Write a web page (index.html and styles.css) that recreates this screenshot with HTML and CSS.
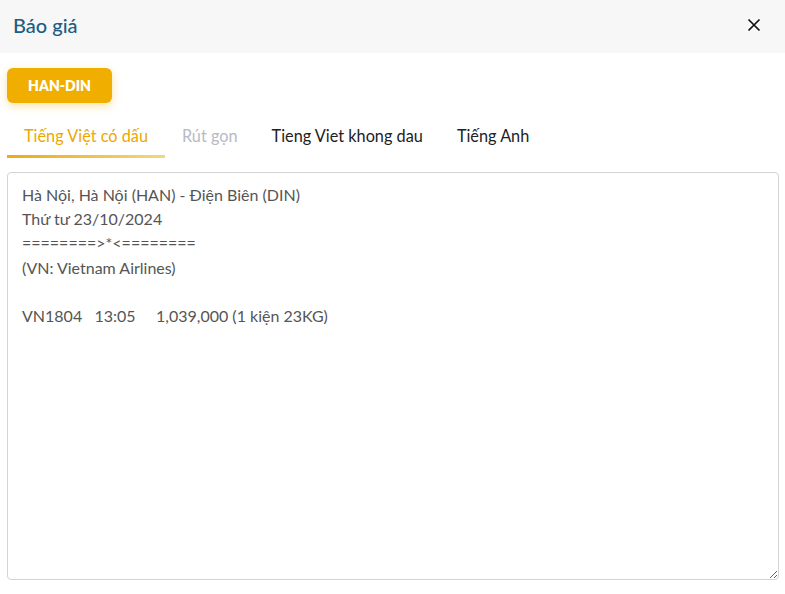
FILE: index.html
```html
<!DOCTYPE html>
<html lang="vi">
<head>
  <meta charset="UTF-8" />
  <title>Báo giá</title>
  <link rel="stylesheet" href="styles.css">
</head>
<body>
  <div class="modal">
    <div class="modal-header">
      <div class="modal-title">Báo giá</div>
      <button class="close-btn" aria-label="Đóng">
        <svg width="14" height="14" viewBox="0 0 14 14"><path d="M1.5 1.5 L12.5 12.5 M12.5 1.5 L1.5 12.5" stroke="#111" stroke-width="1.7" fill="none"/></svg>
      </button>
    </div>

    <div class="modal-body">
      <div class="route-row">
        <button class="route-btn">HAN-DIN</button>
      </div>

      <div class="tabs">
        <div class="tab active">Tiếng Việt có dấu</div>
        <div class="tab disabled">Rút gọn</div>
        <div class="tab">Tieng Viet khong dau</div>
        <div class="tab">Tiếng Anh</div>
      </div>

      <textarea class="quote-text">Hà Nội, Hà Nội (HAN) - Điện Biên (DIN)
Thứ tư 23/10/2024
========>*<========
(VN: Vietnam Airlines)

VN1804   13:05     1,039,000 (1 kiện 23KG)</textarea>
    </div>
  </div>
</body>
</html>
```

FILE: styles.css
```css
body {
  margin: 0;
  font-family: Lato, 'Open Sans', sans-serif;
  background: #fff;
  color: #222;
}

.modal {
  width: 785px;
  height: 594px;
  display: flex;
  flex-direction: column;
}

.modal-header {
  height: 53px;
  background: #f7f7f8;
  display: flex;
  align-items: center;
  justify-content: space-between;
  padding: 0 24px 4px 13px;
  box-sizing: border-box;
}

.modal-title {
  font-size: 20px;
  font-weight: 500;
  color: #1b5e82;
}

.close-btn {
  border: none;
  background: none;
  padding: 0;
  width: 14px;
  height: 14px;
  cursor: pointer;
  display: flex;
}

.modal-body {
  padding: 15px 6px 0 7px;
  display: flex;
  flex-direction: column;
}

.route-row {
  display: flex;
}

.route-btn {
  width: 105px;
  height: 35px;
  border: none;
  border-radius: 6px;
  background: #f0ae00;
  color: #fff;
  font-family: Lato, sans-serif;
  font-weight: 800;
  font-size: 14px;
  box-shadow: 0 3px 10px rgba(240, 174, 0, 0.35);
  cursor: pointer;
}

.tabs {
  display: flex;
  margin-top: 17px;
  height: 38px;
}

.tab {
  font-size: 16.3px;
  padding: 6px 17px 0 17px;
  color: #222;
  cursor: pointer;
}

.tab.active {
  color: #eca800;
  border-bottom: 3px solid transparent;
  border-image: linear-gradient(90deg, #e9ac10, #f3d77e) 1;
  height: 29px;
}

.tab.disabled {
  color: #b7bac4;
}

.quote-text {
  margin-top: 14px;
  width: 772px;
  height: 408px;
  box-sizing: border-box;
  border: 1px solid #d4d4d4;
  border-radius: 4px;
  padding: 10px 14px;
  font-family: Lato, sans-serif;
  font-size: 16px;
  line-height: 24.2px;
  color: #555;
  resize: vertical;
  outline: none;
}
```
